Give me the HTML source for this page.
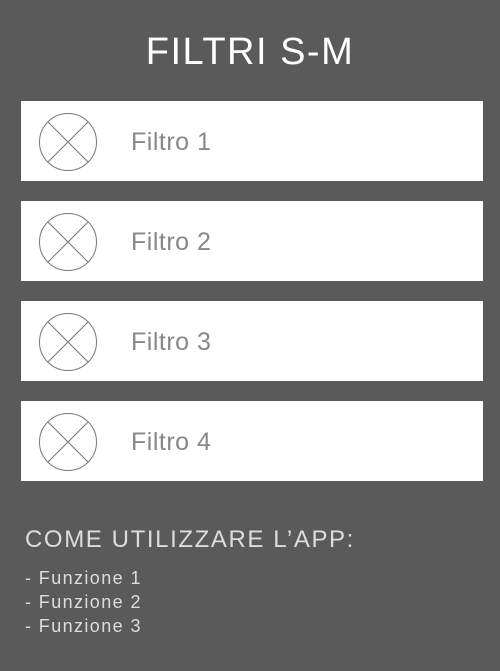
<!DOCTYPE html>
<html><head><style>
body{margin:0;width:500px;height:671px;background:#5a5a5a;font-family:"Liberation Sans",sans-serif;position:relative;overflow:hidden}
.t{position:absolute;left:0;width:500px;text-align:center;top:30px;font-size:38px;color:#fff;letter-spacing:1.5px;line-height:44px}
.b{position:absolute;left:21px;width:462px;height:80px;background:#fff}
.b svg{position:absolute;left:17px;top:11px}
.b span{position:absolute;left:110px;top:26px;font-size:25px;line-height:30px;color:#888;letter-spacing:0.5px}
.h{position:absolute;left:25px;top:525px;font-size:24px;color:#ddd;line-height:30px;letter-spacing:1.6px}
.l{position:absolute;left:25px;top:566px;font-size:18px;color:#ddd;line-height:24px;letter-spacing:1.4px}
</style></head><body>
<div class="t">FILTRI S-M</div>
<div class="b" style="top:101px"><svg width="60" height="60"><circle cx="30" cy="30" r="28.5" fill="none" stroke="#777" stroke-width="1"/><path d="M10 10L50 50M50 10L10 50" stroke="#777" stroke-width="1"/></svg><span>Filtro 1</span></div>
<div class="b" style="top:201px"><svg width="60" height="60"><circle cx="30" cy="30" r="28.5" fill="none" stroke="#777" stroke-width="1"/><path d="M10 10L50 50M50 10L10 50" stroke="#777" stroke-width="1"/></svg><span>Filtro 2</span></div>
<div class="b" style="top:301px"><svg width="60" height="60"><circle cx="30" cy="30" r="28.5" fill="none" stroke="#777" stroke-width="1"/><path d="M10 10L50 50M50 10L10 50" stroke="#777" stroke-width="1"/></svg><span>Filtro 3</span></div>
<div class="b" style="top:401px"><svg width="60" height="60"><circle cx="30" cy="30" r="28.5" fill="none" stroke="#777" stroke-width="1"/><path d="M10 10L50 50M50 10L10 50" stroke="#777" stroke-width="1"/></svg><span>Filtro 4</span></div>
<div class="h">COME UTILIZZARE L’APP:</div>
<div class="l">- Funzione 1<br>- Funzione 2<br>- Funzione 3</div>
</body></html>
